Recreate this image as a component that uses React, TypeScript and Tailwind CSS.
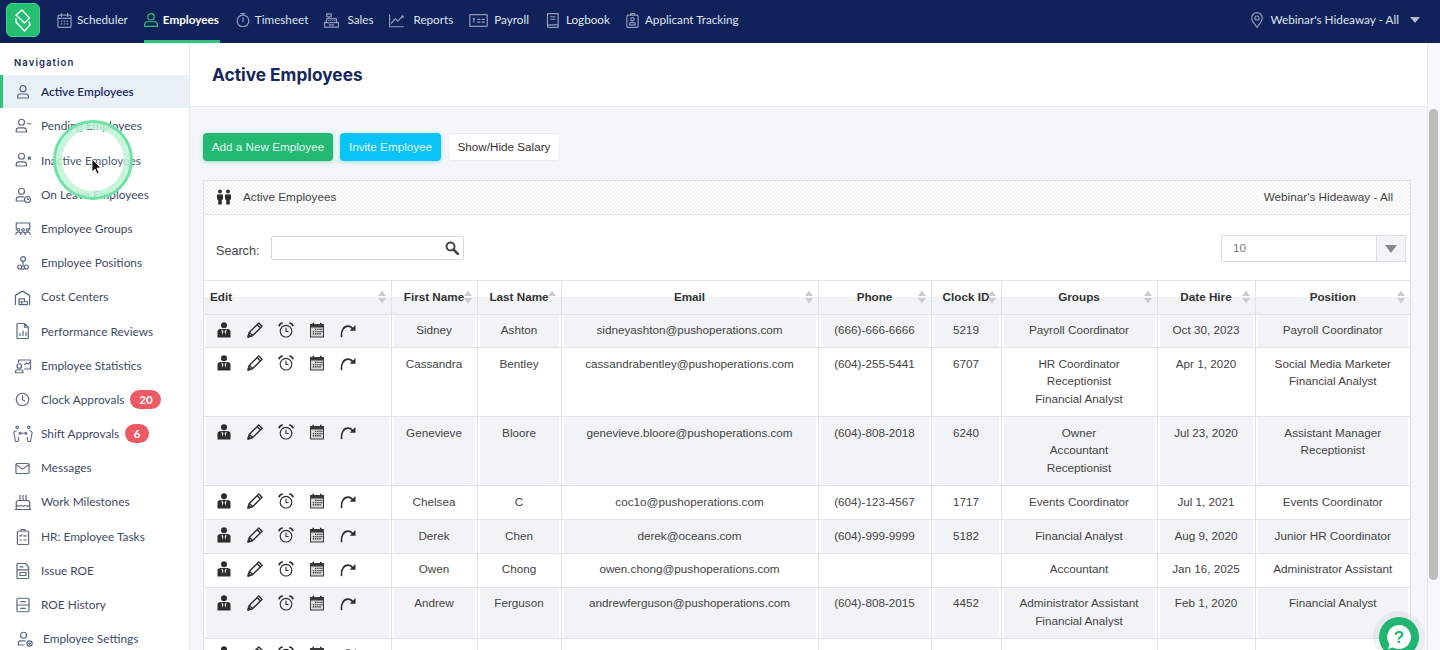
import React from "react";

const S = ({ c, size = 18, children, w = 1.2 }: any) => (
  <svg width={size} height={size} viewBox="0 0 24 24" fill="none" stroke={c} strokeWidth={w * 24 / size} strokeLinecap="round" strokeLinejoin="round" className="shrink-0">
    {children}
  </svg>
);

const NAVC = "#8f9abb";
const nav = [
  { t: "Scheduler", g: "gap-[5px]", i: <S c={NAVC} size={15}><rect x="1.500" y="3.500" width="21" height="19.500" rx="2" /><path d="M1.500 8.500h21M7 1v4.500M17 1v4.500M7 13h1M11.500 13h1M16 13h1M7 17.500h1M11.500 17.500h1M16 17.500h1" /></S> },
  { t: "Employees", a: true, g: "gap-[5px] pr-[1px]", i: <S c="#2fc27b" size={14}><circle cx="12" cy="6.500" r="5.500" /><path d="M1 23v-3c0-3 2.500-5 5-5h12c2.500 0 5 2 5 5v3z" /></S> },
  { t: "Timesheet", g: "gap-[5px]", i: <S c={NAVC} size={14}><circle cx="12" cy="13.500" r="10" /><path d="M12 8.500v6M8.500 .8h7M12 .8V3.500" /></S> },
  { t: "Sales", g: "gap-[8px]", i: <S c={NAVC} size={15}><path d="M.8 15.500h22.400v7H.8zM3 15.500l1.500-6.500h15L21 15.500M8 9V6M4.500 1.500h7v4.500h-7zM7 12h.5M10.500 12h.5M14 12h.5M17 12h.5M8.500 19h7" /></S> },
  { t: "Reports", g: "gap-[9px]", i: <S c={NAVC} size={15}><path d="M1 3v19h22M4 16l6-7 4 4 8-8M20 5h2.500v2.500" /></S> },
  { t: "Payroll", g: "gap-[6px]", i: <S c={NAVC} size={19}><rect x="1" y="4.500" width="22" height="15" rx="1" /><path d="M5.500 10h1.500M6.200 9v5M11 10.500h3M16.500 10.500h3M11 14h3M16.500 14h3" /></S> },
  { t: "Logbook", g: "gap-[6px]", i: <S c={NAVC} size={15}><path d="M4 1h17v18H6.500A2.500 2.500 0 0 0 4 21.500zM4 21.500A1.500 1.500 0 0 0 6 23h15v-4M9 6h7M9 10h7" /></S> },
  { t: "Applicant Tracking", g: "gap-[5px] -ml-[1px]", i: <S c={NAVC} size={15}><rect x="3" y="3.500" width="18" height="19.500" rx="2" /><path d="M9 3.500V1h6v2.500" /><circle cx="12" cy="10" r="2.800" /><path d="M7.500 19v-1.500c0-1 1-2 2-2h5c1 0 2 1 2 2V19z" /></S> },
];

const SC = "#5c6883";
const Person = ({ extra }: any) => (
  <S c={SC} size={18}><circle cx="10" cy="7" r="4" /><path d="M3 20v-2c0-2 1.500-3.500 3.500-3.500H13c2 0 3.500 1.500 3.500 3.500v2z" />{extra}</S>
);
const side: any[] = [
  { t: "Active Employees", active: true, i: <S c={SC} size={16}><circle cx="12" cy="7" r="4.500" /><path d="M4 21v-2.500c0-2 2-3.500 4-3.500h8c2 0 4 1.500 4 3.500V21z" /></S> },
  { t: "Pending Employees", i: <Person extra={<path d="M18 9h4.500" />} /> },
  { t: "Inactive Employees", i: <Person extra={<path d="M19 8l3 3M22 8l-3 3" />} /> },
  { t: "On Leave Employees", i: <S c={SC} size={18}><circle cx="10" cy="7" r="4" /><path d="M13 20H3v-2c0-2 1.500-3.500 3.500-3.500H13" /><circle cx="18" cy="18" r="4" /><path d="M18 16v2h1.500" /></S> },
  { t: "Employee Groups", i: <S c={SC} size={18}><path d="M3 13V4h18v9" /><circle cx="6" cy="13" r="1.700" /><circle cx="12" cy="13" r="1.700" /><circle cx="18" cy="13" r="1.700" /><path d="M2.500 19c0-2 1.500-3 3.500-3s3.500 1 3.500 3M8.500 19c0-2 1.500-3 3.500-3s3.500 1 3.500 3M14.500 19c0-2 1.500-3 3.500-3s3.500 1 3.500 3" /></S> },
  { t: "Employee Positions", i: <S c={SC} size={16}><circle cx="12" cy="6" r="3.500" /><path d="M12 9.500V15" /><circle cx="7" cy="18" r="3" /><circle cx="17" cy="18" r="3" /><circle cx="12" cy="19" r="2.500" /></S> },
  { t: "Cost Centers", i: <S c={SC} size={17}><path d="M2 22V9l10-6 10 6v13" /><path d="M7 14h8v4H7zM11 18h8v4h-8zM7 18v4h4" /></S> },
  { t: "Performance Reviews", i: <S c={SC} size={18}><path d="M5 2h9l5 5v14a1 1 0 0 1-1 1H5a1 1 0 0 1-1-1V3a1 1 0 0 1 1-1zM14 2v5h5M8 18v-3M12 18v-6M16 18v-4" /></S> },
  { t: "Employee Statistics", i: <S c={SC} size={18}><circle cx="7" cy="12" r="3" /><path d="M2 21v-1c0-2 1.500-3 3-3h4c1.500 0 3 1 3 3v1zM6 7V4h16v12h-8M14 10l3-2 2 1.500 1.500-2" /></S> },
  { t: "Clock Approvals", badge: "20", bw: "w-[31px]", i: <S c={SC} size={15}><circle cx="12" cy="12" r="10" /><path d="M12 6v6.500l3.500 2" /></S> },
  { t: "Shift Approvals", badge: "6", bw: "w-[24px]", i: <svg width="20" height="20" viewBox="0 0 24 22" fill="none" stroke={SC} strokeWidth="1.300" strokeLinecap="round" strokeLinejoin="round" className="shrink-0 -ml-[1px] -mr-[1px]"><circle cx="5" cy="3" r="1.500" /><circle cx="19" cy="3" r="1.500" /><path d="M4 7c-2 0-3 2-3 3l1 4 1 6h3l1-5M20 7c2 0 3 2 3 3l-1 4-1 6h-3l-1-5" /><circle cx="8.500" cy="10" r="1.200" /><circle cx="15.500" cy="10" r="1.200" /><path d="M10 10h4" /></svg> },
  { t: "Messages", i: <S c={SC} size={15}><rect x="1.500" y="4" width="21" height="16" rx="2" /><path d="M2 6l10 7 10-7" /></S> },
  { t: "Work Milestones", i: <S c={SC} size={18}><path d="M8 3v7M12 3v7M16 3v7M3 22V13c0-2 1-3 3-3h12c2 0 3 1 3 3v9zM3 16c2 2 4 2 6 .5 2 1.500 4 1.500 6 0 2 1.500 4 1.500 6-.5M1.500 22h21" /></S> },
  { t: "HR: Employee Tasks", i: <S c={SC} size={18}><rect x="4.500" y="4" width="15" height="18" rx="1.500" /><path d="M9.500 4V2h5v2M8 10l1 1 1.500-2M13 10.500h3.500M8 16h2M13 16h3.500" /></S> },
  { t: "Issue ROE", i: <S c={SC} size={18}><path d="M5 2h10l4.500 4.500V21a1 1 0 0 1-1 1H5a1 1 0 0 1-1-1V3a1 1 0 0 1 1-1zM4 10.500h15.500M8 6.500h4M8 14h8v4H8z" /></S> },
  { t: "ROE History", i: <S c={SC} size={18}><rect x="4" y="3" width="16" height="18" rx="1.500" /><path d="M4 12h16M9 7.500h6M9 16.500h6" /></S> },
  { t: "Employee Settings", off: true, i: <S c={SC} size={18}><circle cx="10" cy="7" r="4" /><path d="M11 20H3v-2c0-2 1.500-3.500 3.500-3.500H12" /><circle cx="18" cy="18" r="3.500" /><circle cx="18" cy="18" r="1" /></S> },
];

const IC = "#2e2e2e";
const Actions = () => (
  <div className="flex items-center gap-[15px] pl-[5px] h-[17px]">
    <svg width="16" height="16" viewBox="0 0 16 16" className="shrink-0"><circle cx="8" cy="3.200" r="3" fill={IC} /><path d="M1.500 15.500V9.500C1.500 8 2.800 7 4.500 7h7C13.200 7 14.500 8 14.500 9.500v6z" fill={IC} /><path d="M5.300 7.200L7.300 9 6.800 13zM10.700 7.200L8.700 9 9.200 13z" fill="#ffffff" /></svg>
    <svg width="16" height="16" viewBox="0 0 16 16" fill="none" stroke={IC} strokeWidth="1.400" strokeLinejoin="round" className="shrink-0"><path d="M1.200 14.800l1-4.300L11.800 .9l3.300 3.300-9.600 9.600zM2.500 10.500l3 3M10.200 2.800l3 3" /><path d="M1 15l.6-2.500 1.900 1.900z" fill={IC} /></svg>
    <svg width="16" height="16" viewBox="0 0 16 16" fill="none" stroke={IC} strokeWidth="1.100" className="shrink-0"><circle cx="8" cy="9.200" r="5.800" /><path d="M8 5.700V9.500h2.600" /><path d="M.9 4.300C1.400 2.400 3 1 4.800 1M15.100 4.300C14.600 2.400 13 1 11.200 1" strokeWidth="1.700" /></svg>
    <svg width="16" height="16" viewBox="0 0 16 16" className="shrink-0"><path d="M1 2h14v13.500H1z" fill="#3a3a3a" /><path d="M2 5.500h12v9H2z" fill="#d8d8d8" /><path d="M3.500 .8h1.500v2H3.500zM11 .8h1.500v2H11z" fill={IC} /><path d="M6 6.700h1.300V8H6zM8.200 6.700h1.300V8H8.200zM10.400 6.700h1.300V8h-1.300zM12.300 6.700h1.200V8h-1.200zM3.800 8.900h1.300v1.300H3.800zM6 8.900h1.300v1.300H6zM8.200 8.900h1.300v1.300H8.200zM10.400 8.900h1.300v1.300h-1.300zM12.300 8.900h1.200v1.300h-1.200zM3.800 11.100h1.300v1.300H3.800zM6 11.100h1.300v1.300H6zM8.200 11.100h1.300v1.300H8.200zM10.400 11.100h1.300v1.300h-1.300z" fill="#3a3a3a" /></svg>
    <svg width="16" height="16" viewBox="0 0 16 16" fill="none" className="shrink-0"><path d="M1.500 14.500C.8 8.500 4 4.200 8 4.200c2 0 3.600 1 4.600 2.600" stroke={IC} strokeWidth="1.700" strokeLinecap="round" /><path d="M15.500 3V8.800H9.700z" fill={IC} /></svg>
  </div>
);

const cols = [
  { t: "Edit", w: "w-[187px]", left: true },
  { t: "First Name", w: "w-[86px]" },
  { t: "Last Name", w: "w-[84px]", up: true },
  { t: "Email", w: "w-[257px]" },
  { t: "Phone", w: "w-[113px]" },
  { t: "Clock ID", w: "w-[70px]" },
  { t: "Groups", w: "w-[156px]" },
  { t: "Date Hire", w: "w-[98px]" },
  { t: "Position", w: "w-[155px]" },
];

const rows: string[][] = [
  ["Sidney", "Ashton", "sidneyashton@pushoperations.com", "(666)-666-6666", "5219", "Payroll Coordinator", "Oct 30, 2023", "Payroll Coordinator"],
  ["Cassandra", "Bentley", "cassandrabentley@pushoperations.com", "(604)-255-5441", "6707", "HR Coordinator\nReceptionist\nFinancial Analyst", "Apr 1, 2020", "Social Media Marketer\nFinancial Analyst"],
  ["Genevieve", "Bloore", "genevieve.bloore@pushoperations.com", "(604)-808-2018", "6240", "Owner\nAccountant\nReceptionist", "Jul 23, 2020", "Assistant Manager\nReceptionist"],
  ["Chelsea", "C", "coc1o@pushoperations.com", "(604)-123-4567", "1717", "Events Coordinator", "Jul 1, 2021", "Events Coordinator"],
  ["Derek", "Chen", "derek@oceans.com", "(604)-999-9999", "5182", "Financial Analyst", "Aug 9, 2020", "Junior HR Coordinator"],
  ["Owen", "Chong", "owen.chong@pushoperations.com", "", "", "Accountant", "Jan 16, 2025", "Administrator Assistant"],
  ["Andrew", "Ferguson", "andrewferguson@pushoperations.com", "(604)-808-2015", "4452", "Administrator Assistant\nFinancial Analyst", "Feb 1, 2020", "Financial Analyst"],
  ["", "", "", "", "", "", "", ""],
];

const Sort = ({ up }: { up?: boolean }) => (
  <svg width="8" height="14" viewBox="0 0 8 14" className="absolute right-[5px] top-[9px]">
    <path d="M4 0.500L8 6H0z" fill="#c9cdd0" />
    {!up && <path d="M4 13.500L8 8H0z" fill="#c9cdd0" />}
  </svg>
);

export default function App() {
  return (
    <div className="relative h-[650px] w-[1440px] overflow-hidden flex flex-col bg-white font-['Lato',sans-serif]">
      <header className="h-[43px] shrink-0 bg-[#0f2259] flex items-stretch">
        <div className="ml-[6px] mt-[3px] w-[34px] h-[34px] rounded-[6px] bg-[#22c070] border border-[#3fd08a] flex items-center justify-center">
          <svg width="26" height="26" viewBox="0 0 26 26" fill="none" stroke="#ffffff" strokeWidth="1.500" strokeLinejoin="round">
            <path d="M12 3L19.500 11 14.500 16 6 8z" />
            <path d="M6 11.500V15l8.500 9 5.500-6-1-3.500" />
          </svg>
        </div>
        <nav className="ml-[17px] flex gap-[16px]">
          {nav.map((n) => (
            <div key={n.t} className={`flex items-center ${n.g} h-[43px] text-[11.7px] ${n.a ? "border-b-[3px] border-[#2fc27b] text-white font-bold" : "text-[#dfe4f0] pb-[3px]"}`}>
              {n.i}
              <span>{n.t}</span>
            </div>
          ))}
        </nav>
        <div className="ml-auto mr-[20px] pb-[3px] flex items-center text-[11.75px] text-[#dfe4f0]">
          <S c={NAVC} size={16}><path d="M12 23c-4-5-8-9.500-8-14a8 8 0 0 1 16 0c0 4.500-4 9-8 14z" /><circle cx="12" cy="9" r="3" /></S>
          <span className="ml-[5px]">Webinar's Hideaway - All</span>
          <svg width="10" height="6" viewBox="0 0 10 6" className="ml-[11px]"><path d="M0 0h10L5 6z" fill="#b6bdd4" /></svg>
        </div>
      </header>

      <div className="flex flex-1 min-h-0">
        <aside className="w-[190px] shrink-0 border-r border-[#e6ebf1] bg-white">
          <div className="h-[32px] pt-[14px] pl-[14px] text-[9.5px] leading-[12px] font-semibold tracking-[1.1px] text-[#1d2c5e] font-['Inter',sans-serif]">Navigation</div>
          {side.map((s) => (
            <div key={s.t} className={`relative flex items-center text-[11.85px] ${s.active ? "h-[33.2px] mb-[1px] bg-[#e9f0f7] text-[#1d2c5e] font-semibold" : "h-[34.2px] text-[#3f4a66]"} ${s.off ? "pl-[2px]" : ""}`}>
              {s.active && <div className="absolute left-0 top-0 bottom-0 w-[3px] bg-[#2fc27b]" />}
              <div className="w-[41px] shrink-0 pl-[4px] flex justify-center">{s.i}</div>
              <span>{s.t}</span>
              {s.badge && <span className={`ml-[6px] ${s.bw} h-[19px] rounded-full bg-[#ee5a64] text-white text-[11.5px] font-bold flex items-center justify-center`}>{s.badge}</span>}
            </div>
          ))}
        </aside>

        <main className="flex-1 min-w-0 flex flex-col">
          <div className="h-[64px] shrink-0 bg-white border-b border-[#e6ebf1] pl-[22px] pt-[22px] text-[17.3px] leading-[20px] font-bold text-[#16285a] font-['Inter',sans-serif]">Active Employees</div>
          <div className="flex-1 min-h-0 bg-[#f4f6fa] pl-[13px] pr-[16px] pt-[26px] font-['Liberation_Sans',sans-serif]">
            <div className="flex gap-[7px]">
              <button className="h-[28px] w-[130px] rounded-[4px] bg-[#23b974] text-[#e0f8ec] text-[11.7px] shadow-[0_1px_4px_rgba(35,185,116,0.4)]">Add a New Employee</button>
              <button className="h-[28px] w-[101px] rounded-[4px] bg-[#0ac3f7] text-[#e0f7fd] text-[11.7px] shadow-[0_1px_4px_rgba(10,195,247,0.4)]">Invite Employee</button>
              <button className="h-[28px] w-[112px] rounded-[4px] bg-white border border-[#eceef2] text-[#333] text-[11.7px]">Show/Hide Salary</button>
            </div>
            <section className="mt-[19px] bg-white border border-[#e1e3e6] text-[#444]">
              <div className="h-[34px] flex items-center justify-between pl-[12px] pr-[17px] pb-[2px] text-[11.75px] border-b border-[#e1e3e6] bg-[repeating-conic-gradient(#f3f3f3_0_25%,#ffffff_0_50%)] bg-size-[4px_4px]">
                <div className="flex items-center">
                  <svg width="16" height="16" viewBox="0 0 16 16" fill="#2b2b2b" className="shrink-0"><circle cx="4" cy="2.500" r="1.900" /><circle cx="12" cy="2.500" r="1.900" /><path d="M1 5.500h6v5H5.800V15.500H2.200V10.500H1zM9 5.500h6v5h-1.200V15.500h-3.600V10.500H9z" /></svg>
                  <span className="ml-[11px]">Active Employees</span>
                </div>
                <span>Webinar's Hideaway - All</span>
              </div>
              <div className="h-[66px] border-b border-[#e1e3e6] flex items-start justify-between pl-[12px] pr-[4px]">
                <div className="flex items-start mt-[21px]">
                  <span className="text-[12.6px] leading-[16px] mt-[7px] text-[#444]">Search:</span>
                  <div className="ml-[12px] w-[193px] h-[24px] border border-[#d6d8db] rounded-[2px] bg-white flex items-center justify-end pr-[4px]">
                    <svg width="14" height="14" viewBox="0 0 14 14" fill="none" stroke="#444" strokeWidth="2"><circle cx="5.500" cy="5.500" r="4" /><path d="M8.500 8.500L13 13" strokeWidth="2.500" strokeLinecap="round" /></svg>
                  </div>
                </div>
                <div className="mt-[20px] w-[185px] h-[27px] border border-[#dcdee1] bg-white flex items-center">
                  <span className="pl-[11px] pt-[1px] text-[11.5px] text-[#777] flex-1">10</span>
                  <div className="w-[29px] h-full border-l border-[#dcdee1] bg-[#f3f4f5] flex items-center justify-center">
                    <svg width="12" height="8" viewBox="0 0 12 8"><path d="M0 0h12L6 8z" fill="#8a8a8a" /></svg>
                  </div>
                </div>
              </div>
              <table className="w-full table-fixed border-collapse border-hidden text-[11.7px] leading-[17.6px]">
                <colgroup>
                  {cols.map((c) => <col key={c.t} className={c.w} />)}
                </colgroup>
                <thead>
                  <tr>
                    {cols.map((c) => (
                      <th key={c.t} className={`relative h-[33px] p-0 px-[6px] border border-[#e1e3e6] font-bold text-[#333] bg-[linear-gradient(#ffffff_50%,#f1f3f5_50%)] ${c.left ? "text-left" : "text-center"}`}>
                        {c.t}
                        <Sort up={c.up} />
                      </th>
                    ))}
                  </tr>
                </thead>
                <tbody>
                  {rows.map((r, i) => (
                    <tr key={i} className={i % 2 === 0 ? "bg-[#f1f3f5]" : "bg-white"}>
                      <td className="border border-[#e1e3e6] pt-[6.500px] pb-[8.700px] px-[7px] align-top shadow-[inset_2px_0_0_#fff,inset_-2px_0_0_#fff]"><Actions /></td>
                      {r.map((v, j) => (
                        <td key={j} className="border border-[#e1e3e6] pt-[6.500px] pb-[8.700px] px-[4px] text-center align-top whitespace-pre-line shadow-[inset_2px_0_0_#fff,inset_-2px_0_0_#fff]">{v}</td>
                      ))}
                    </tr>
                  ))}
                </tbody>
              </table>
            </section>
          </div>
        </main>

        <div className="w-[13px] shrink-0 bg-[#f7f8fb] border-l border-[#e6ebf1] pt-[66px] pl-[1px]">
          <div className="w-[9px] h-[471px] rounded-full bg-[#bcbebc]" />
        </div>
      </div>

      <div className="absolute left-[53px] top-[120px] w-[80px] h-[80px] rounded-full border-[3px] border-[#6fe3a5] bg-white/10 shadow-[inset_0_0_0_6px_rgba(190,243,213,0.85)]" />
      <svg width="12" height="18" viewBox="0 0 12 18" className="absolute left-[91px] top-[158px]">
        <path d="M1 1v13l3-3 2 5 2-1-2-5h4z" fill="#111" stroke="#fff" strokeWidth="0.800" />
      </svg>
      <div className="absolute left-[1373px] top-[611px] w-[52px] h-[52px] rounded-full bg-[#1f2a44]/5 flex items-center justify-center">
        <div className="w-[40px] h-[40px] rounded-full bg-[#21b573] flex items-center justify-center">
          <svg width="30" height="30" viewBox="0 0 30 30">
            <path d="M15 3a12 12 0 1 1-6 22.400L4 27l1.500-5A12 12 0 0 1 15 3z" fill="#ffffff" />
            <text x="15" y="20.500" textAnchor="middle" fontSize="17" fontWeight="700" fill="#21b573" fontFamily="Liberation Sans">?</text>
          </svg>
        </div>
      </div>
    </div>
  );
}
